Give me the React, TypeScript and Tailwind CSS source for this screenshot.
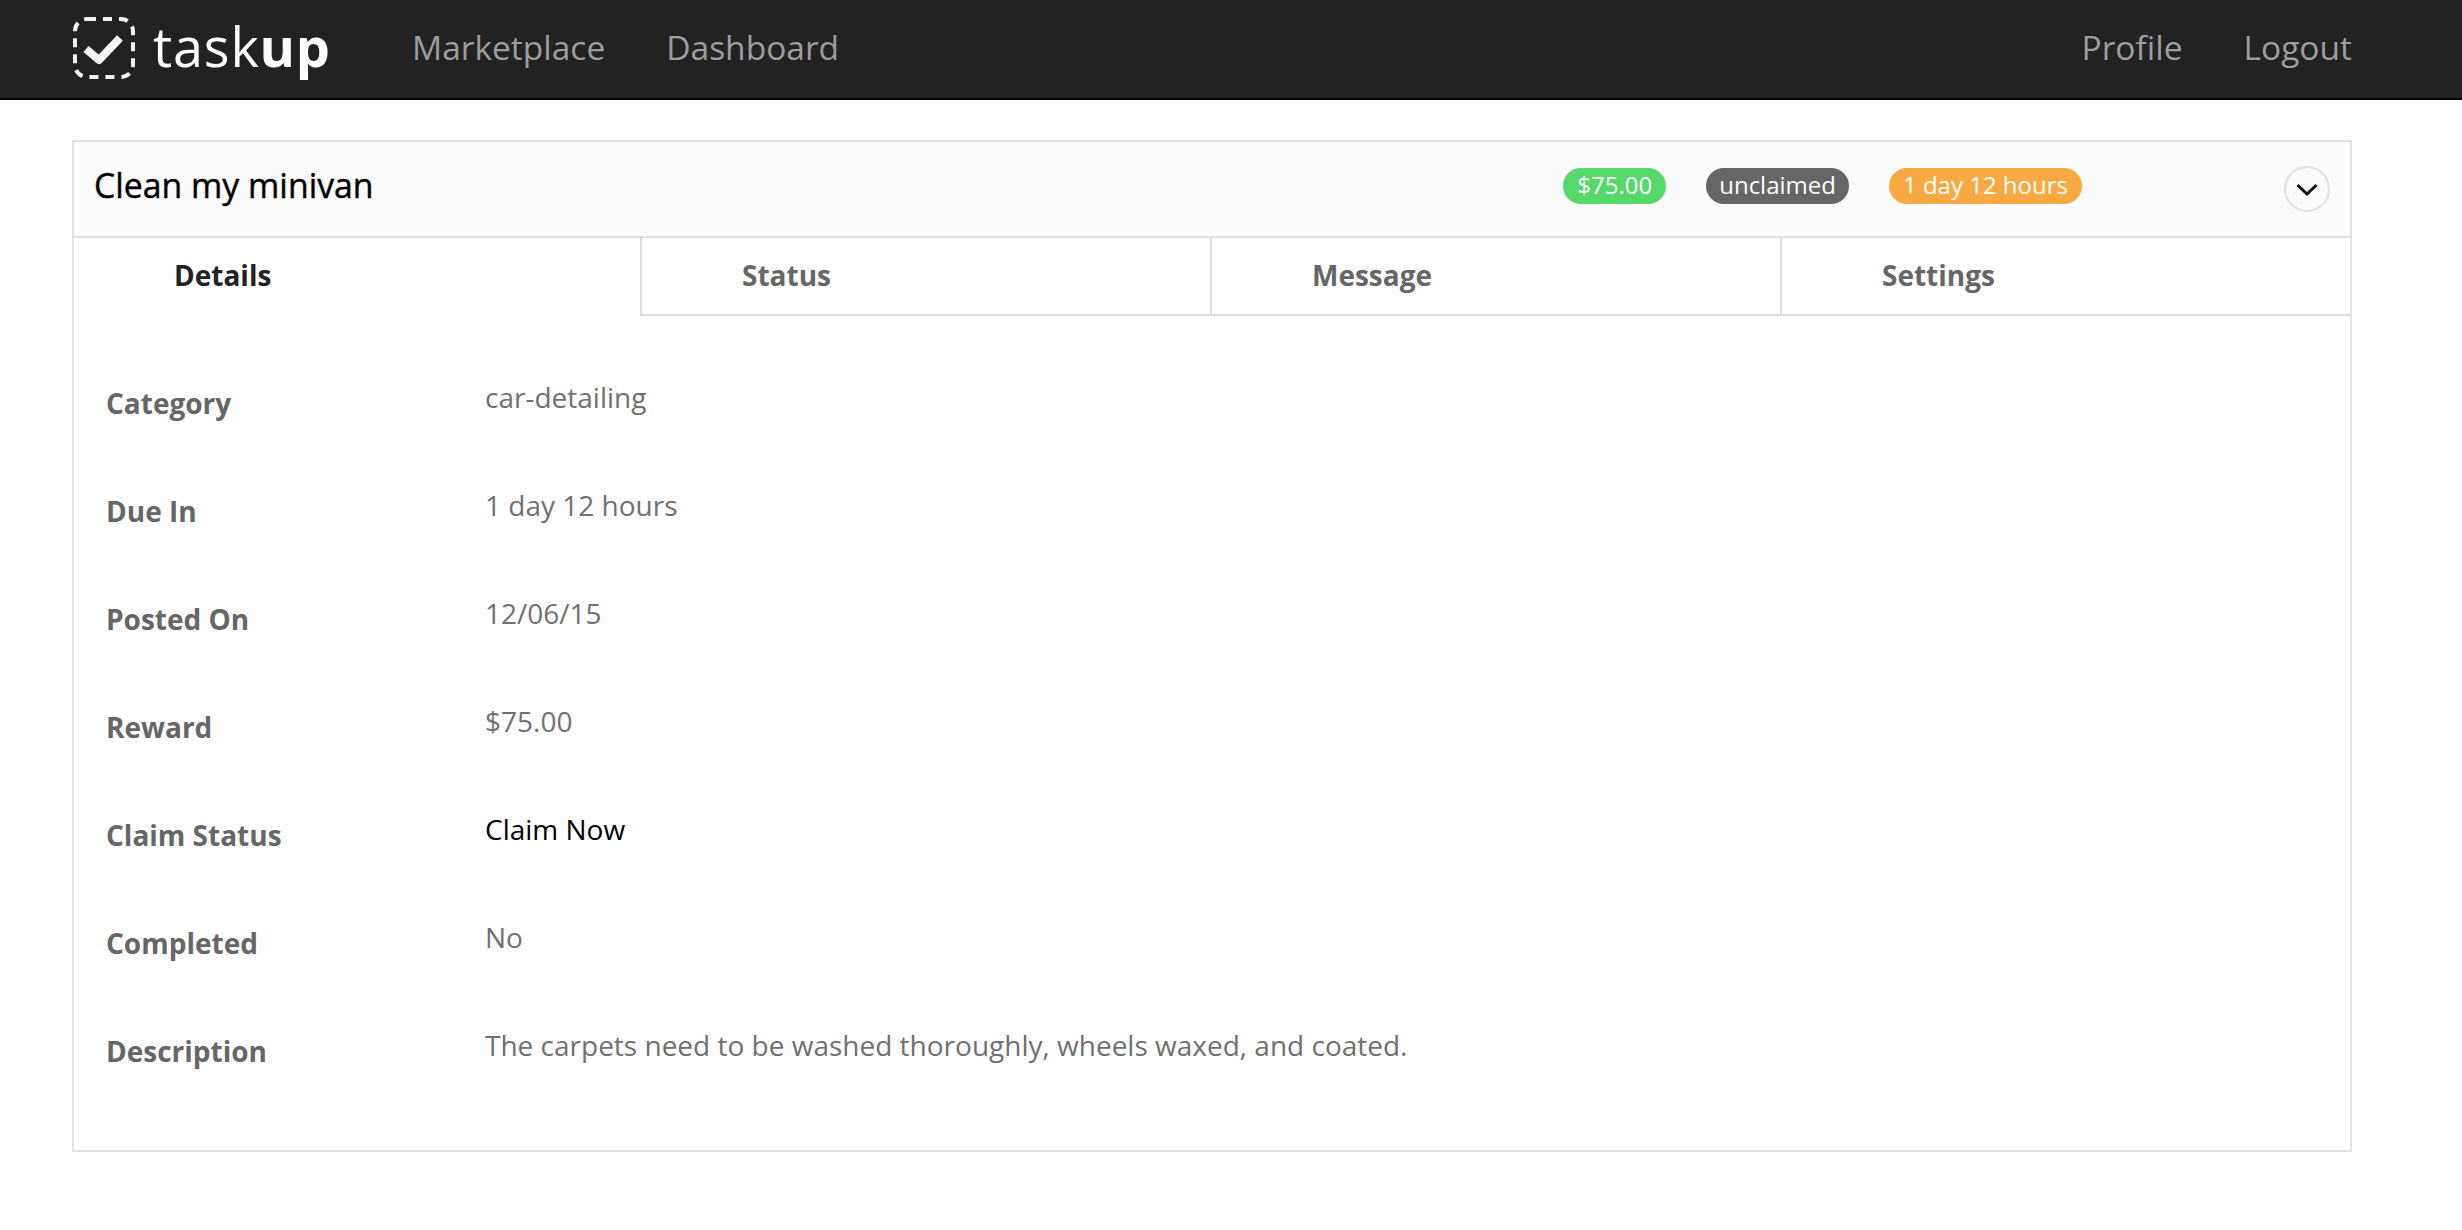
const font = "font-['Open_Sans',sans-serif]";

function Logo() {
  return (
    <svg width="64" height="64" viewBox="0 0 64 64" fill="none" className="shrink-0">
      <rect x="3" y="3" width="58" height="58" rx="12" stroke="#f2f2f2" strokeWidth="4" strokeDasharray="9 7" />
      <path d="M14 33 L27 44 L48 22" stroke="#f6f6f6" strokeWidth="8" strokeLinejoin="round" />
    </svg>
  );
}

function Row({ label, value, dark }: { label: string; value: string; dark?: boolean }) {
  return (
    <div className="flex h-[108px]">
      <div className="w-[379px] pt-[15px] text-[28px] leading-[38px] font-bold text-[#666666]">{label}</div>
      <div className={`text-[28px] leading-[38px] pt-[9px] ${dark ? "text-black" : "text-[#707070]"}`}>{value}</div>
    </div>
  );
}

function Tab({ label, active, width }: { label: string; active?: boolean; width: string }) {
  return (
    <div
      className={`${width} shrink-0 h-[78px] pt-[18px] text-[28px] leading-[38px] font-bold border-[#dddddd] ${
        active ? "pl-[100px] text-[#222222]" : "pl-[100px] text-[#666666] border-l-2 border-b-2"
      }`}
    >
      {label}
    </div>
  );
}

function Badge({ text, color }: { text: string; color: string }) {
  return (
    <span className={`h-[36px] rounded-[18px] text-[24px] leading-[34px] text-white ${color}`}>{text}</span>
  );
}

export default function App() {
  return (
    <div className={`${font} min-h-[1230px] bg-white`}>
      <nav className="h-[100px] bg-[#222222] border-b-2 border-black flex items-center pl-[72px] pr-[110px] pb-[3px]">
        <Logo />
        <span className="ml-[17px] text-[54px] leading-none text-white tracking-[0.8px] w-[178px] -mt-[4px]">
          task<span className="font-bold">up</span>
        </span>
        <a className="ml-[81px] text-[33.5px] text-[#9d9d9d]">Marketplace</a>
        <a className="ml-[61px] text-[33.5px] text-[#9d9d9d]">Dashboard</a>
        <div className="flex-1" />
        <a className="text-[33.5px] text-[#9d9d9d]">Profile</a>
        <a className="ml-[61px] text-[33.5px] text-[#9d9d9d]">Logout</a>
      </nav>
      <div className="mx-[72px] mt-[40px] w-[2280px] h-[1012px] border-2 border-[#e2e2e2]">
        <div className="h-[96px] bg-[#fbfbfb] border-b-2 border-[#e2e2e2] flex items-center pl-[20px] pr-[20px]">
          <span className="text-[33.8px] leading-none text-black [-webkit-text-stroke:0.4px_black] -mt-[6px]">Clean my minivan</span>
          <div className="flex-1" />
          <div className="flex items-center gap-[40px] mr-[202px] -mt-[6px]">
            <Badge text="$75.00" color="px-[14px] bg-[#55d96b]" />
            <Badge text="unclaimed" color="px-[13px] bg-[#666666]" />
            <Badge text="1 day 12 hours" color="px-[14px] bg-[#f9a942]" />
          </div>
          <button className="w-[46px] h-[46px] rounded-full border-2 border-[#e2e2e2] flex items-center justify-center">
            <svg width="24" height="14" viewBox="0 0 24 14" fill="none" className="mt-[2px]">
              <path d="M2.5 2 L12 11 L21.5 2" stroke="#111" strokeWidth="3" />
            </svg>
          </button>
        </div>
        <div className="flex">
          <Tab width="w-[566px]" label="Details" active />
          <Tab width="w-[570px]" label="Status" />
          <Tab width="w-[570px]" label="Message" />
          <Tab width="w-[570px]" label="Settings" />
        </div>
        <div className="pl-[32px] pt-[53px]">
          <Row label="Category" value="car-detailing" />
          <Row label="Due In" value="1 day 12 hours" />
          <Row label="Posted On" value="12/06/15" />
          <Row label="Reward" value="$75.00" />
          <Row label="Claim Status" value="Claim Now" dark />
          <Row label="Completed" value="No" />
          <Row label="Description" value="The carpets need to be washed thoroughly, wheels waxed, and coated." />
        </div>
      </div>
    </div>
  );
}
